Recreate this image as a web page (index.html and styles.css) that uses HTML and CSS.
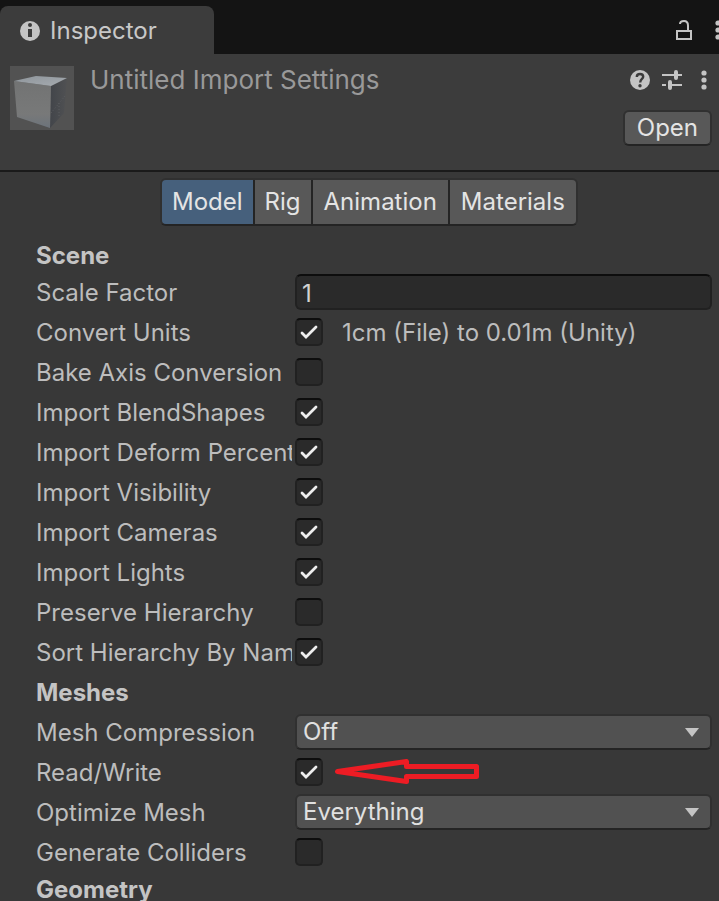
FILE: index.html
```html
<!DOCTYPE html>
<html lang="en">
<head>
<meta charset="utf-8">
<meta name="viewport" content="width=device-width, initial-scale=1">
<title>Inspector</title>
<link rel="stylesheet" href="styles.css">
</head>
<body>
<main class="inspector">
  <div class="tabbar">
    <div class="tab">
      <svg class="tab-icon" viewBox="0 0 20 20" aria-hidden="true">
        <circle cx="10" cy="10" r="10" fill="#c4c4c4"/>
        <circle cx="10" cy="4" r="2" fill="#3c3c3c"/>
        <path d="M8 8h4v8H8z" fill="#3c3c3c"/>
      </svg>
      <span class="tab-name">Inspector</span>
    </div>
    <div class="tabbar-tools">
      <button class="icon-button" type="button" aria-label="Lock">
        <svg width="16" height="20" viewBox="0 0 16 20"><path d="M1 11h14v8H1zM12 11V5.500C12 2.500 10.500 1 8 1S4 2.200 4 4" fill="none" stroke="#c4c4c4" stroke-width="2"/></svg>
      </button>
      <button class="icon-button" type="button" aria-label="Window menu">
        <svg width="6" height="20" viewBox="0 0 6 20" fill="#c4c4c4"><circle cx="3" cy="3" r="2.600"/><circle cx="3" cy="10" r="2.600"/><circle cx="3" cy="17" r="2.600"/></svg>
      </button>
    </div>
  </div>

  <header class="header">
    <svg class="preview" viewBox="0 0 64 64" aria-hidden="true">
      <defs>
        <linearGradient id="top" x1="0" y1="0" x2="1" y2="1"><stop offset="0" stop-color="#8e959b"/><stop offset="1" stop-color="#a6abb0"/></linearGradient>
        <linearGradient id="front" x1="0" y1="0" x2="0" y2="1"><stop offset="0" stop-color="#727373"/><stop offset=".7" stop-color="#787979"/><stop offset="1" stop-color="#6c737b"/></linearGradient>
        <linearGradient id="side" x1="0" y1="0" x2="1" y2="0"><stop offset="0" stop-color="#42454a"/><stop offset="1" stop-color="#505153"/></linearGradient>
      </defs>
      <path d="M0 0h64v64H0z" fill="#525252"/>
      <path d="M41 20L57 12 54 47 40 62z" fill="url(#side)"/>
      <path d="M4 15L41 20 40 62 7 51z" fill="url(#front)"/>
      <path d="M4 15L26 10 57 12 41 20z" fill="url(#top)"/>
      <path d="M41 47L55 30M49 37v14" stroke="#5b5d60" stroke-dasharray="1 2" fill="none"/>
    </svg>
    <h1 class="title">Untitled Import Settings</h1>
    <div class="header-side">
      <div class="header-tools">
        <button class="icon-button" type="button" aria-label="Help">
          <svg width="20" height="20" viewBox="0 0 20 20"><circle cx="10" cy="10" r="10" fill="#c4c4c4"/><path d="M6.800 7C6.800 5 8 4 10 4s3.200 1.100 3.200 2.800C13.200 9 10.200 9 10.200 12.500" fill="none" stroke="#3c3c3c" stroke-width="2.400"/><circle cx="10" cy="15.700" r="1.700" fill="#3c3c3c"/></svg>
        </button>
        <button class="icon-button" type="button" aria-label="Presets">
          <svg width="20" height="20" viewBox="0 0 20 20" fill="none" stroke="#c4c4c4"><path d="M0 5h12M16 5h4M0 15h4M8 15h12" stroke-width="2"/><path d="M14 2v6M8 12v6" stroke-width="4" stroke-linecap="round"/></svg>
        </button>
        <button class="icon-button" type="button" aria-label="More">
          <svg width="6" height="20" viewBox="0 0 6 20" fill="#c4c4c4"><circle cx="3" cy="3" r="2.600"/><circle cx="3" cy="10" r="2.600"/><circle cx="3" cy="17" r="2.600"/></svg>
        </button>
      </div>
      <button class="open-button" type="button">Open</button>
    </div>
  </header>

  <div class="body">
    <nav class="modes" aria-label="Import settings">
      <button class="mode mode-short mode-active" type="button" aria-pressed="true">Model</button>
      <button class="mode mode-short" type="button">Rig</button>
      <button class="mode" type="button">Animation</button>
      <button class="mode" type="button">Materials</button>
    </nav>

    <h2 class="section section-compact">Scene</h2>
    <div class="row"><label class="label" for="scale">Scale Factor</label><input class="text-field" id="scale" type="text" value="1"></div>
    <div class="row"><label class="label" for="units">Convert Units</label><input class="check" id="units" type="checkbox" checked><span class="note">1cm (File) to 0.01m (Unity)</span></div>
    <div class="row"><label class="label" for="bake">Bake Axis Conversion</label><input class="check" id="bake" type="checkbox"></div>
    <div class="row"><label class="label" for="blend">Import BlendShapes</label><input class="check" id="blend" type="checkbox" checked></div>
    <div class="row"><label class="label" for="deform">Import Deform Percent</label><input class="check" id="deform" type="checkbox" checked></div>
    <div class="row"><label class="label" for="visibility">Import Visibility</label><input class="check" id="visibility" type="checkbox" checked></div>
    <div class="row"><label class="label" for="cameras">Import Cameras</label><input class="check" id="cameras" type="checkbox" checked></div>
    <div class="row"><label class="label" for="lights">Import Lights</label><input class="check" id="lights" type="checkbox" checked></div>
    <div class="row"><label class="label" for="preserve">Preserve Hierarchy</label><input class="check" id="preserve" type="checkbox"></div>
    <div class="row"><label class="label" for="sort">Sort Hierarchy By Name</label><input class="check" id="sort" type="checkbox" checked></div>

    <h2 class="section">Meshes</h2>
    <div class="row"><label class="label" for="compression">Mesh Compression</label>
      <div class="select-wrap"><select class="select" id="compression"><option>Off</option></select><svg class="caret" viewBox="0 0 14 9" aria-hidden="true"><path d="M0 0h14L7 9z" fill="#c4c4c4"/></svg></div>
    </div>
    <div class="row"><label class="label" for="readwrite">Read/Write</label><input class="check" id="readwrite" type="checkbox" checked>
      <svg class="arrow" viewBox="0 0 146 26" aria-hidden="true"><path d="M3.500 12.500L72.500 2.500v5h70v10h-70v5z" fill="none" stroke="#ed1c24" stroke-width="5" stroke-linejoin="round"/></svg>
    </div>
    <div class="row"><label class="label" for="optimize">Optimize Mesh</label>
      <div class="select-wrap"><select class="select" id="optimize"><option>Everything</option></select><svg class="caret" viewBox="0 0 14 9" aria-hidden="true"><path d="M0 0h14L7 9z" fill="#c4c4c4"/></svg></div>
    </div>
    <div class="row"><label class="label" for="colliders">Generate Colliders</label><input class="check" id="colliders" type="checkbox"></div>

    <h2 class="section section-compact">Geometry</h2>
  </div>
</main>
</body>
</html>
```

FILE: styles.css
```css
* {
  box-sizing: border-box;
}

body {
  margin: 0;
  background: #383838;
  color: #bdbdbd;
  font: 400 24px/32px Inter, "Liberation Sans", sans-serif;
}

button,
input,
select {
  margin: 0;
  font: inherit;
  color: inherit;
}

.inspector {
  height: 100vh;
  overflow: hidden;
}

.tabbar {
  display: flex;
  justify-content: space-between;
  height: 54px;
  padding-top: 6px;
  background: #141414;
}

.tab {
  display: flex;
  align-items: center;
  gap: 10px;
  width: 214px;
  padding: 2px 0 0 20px;
  border-radius: 8px 8px 0 0;
  background: #3c3c3c;
  color: #c8c8c8;
}

.tab-icon {
  width: 20px;
  height: 20px;
}

.tabbar-tools {
  display: flex;
  align-items: center;
  gap: 23px;
  margin-right: -2px;
}

.icon-button {
  display: flex;
  padding: 0;
  border: 0;
  background: none;
}

.header {
  display: flex;
  align-items: flex-start;
  height: 118px;
  padding: 12px 8px 0 10px;
  border-bottom: 2px solid #1a1a1a;
  background: #3c3c3c;
}

.preview {
  flex: none;
  width: 64px;
  height: 64px;
}

.title {
  flex: 1;
  margin: -2px 0 0 16px;
  color: #999;
  font-size: 26px;
  font-weight: 400;
}

.header-side {
  display: flex;
  flex-direction: column;
  align-items: flex-end;
  gap: 20px;
  padding-top: 4px;
}

.header-tools {
  display: flex;
  gap: 12px;
  padding-right: 4px;
}

.header-tools .icon-button:last-child {
  margin-left: 7px;
}

.open-button {
  height: 36px;
  margin-right: -1px;
  padding: 0 12px;
  border: 2px solid #303030;
  border-bottom-color: #242424;
  border-radius: 6px;
  background: #585858;
  color: #e4e4e4;
}

.body {
  padding: 6px 7px 0 36px;
}

.modes {
  display: flex;
  width: max-content;
  margin: 0 0 12px 124px;
  border: 2px solid #303030;
  border-bottom-color: #242424;
  border-radius: 6px;
  overflow: hidden;
}

.mode {
  height: 44px;
  padding: 0 11px;
  border: 0;
  border-left: 2px solid #242424;
  background: #585858;
  color: #e4e4e4;
}

.mode-short {
  padding: 0 10px;
}

.mode-active {
  border-left: 0;
  background: #46607c;
}

.section {
  height: 40px;
  margin: 0;
  color: #c4c4c4;
  font-size: 24px;
  font-weight: 700;
  line-height: 42px;
}

.section-compact {
  height: 34px;
  line-height: 36px;
}

.row {
  display: flex;
  align-items: center;
  height: 40px;
}

.label {
  flex: none;
  width: 256px;
  margin-right: 3px;
  padding-top: 2px;
  overflow: hidden;
  white-space: nowrap;
}

.text-field {
  flex: 1;
  min-width: 0;
  height: 36px;
  padding: 2px 5px 0;
  border: 2px solid #212121;
  border-top-color: #0d0d0d;
  border-radius: 6px;
  background: #2a2a2a;
  color: #d2d2d2;
}

.check {
  flex: none;
  width: 28px;
  height: 28px;
  appearance: none;
  border: 2px solid #212121;
  border-top-color: #0d0d0d;
  border-radius: 5px;
  background: #2a2a2a;
}

.check:checked {
  background: #2a2a2a url("data:image/svg+xml,%3Csvg xmlns='http://www.w3.org/2000/svg' viewBox='0 0 24 24'%3E%3Cpath d='M5 13l4 4L19 7' fill='none' stroke='%23eee' stroke-width='2.800' stroke-linecap='round'/%3E%3C/svg%3E") center / 24px 24px no-repeat;
}

.note {
  margin-left: 19px;
  padding-top: 2px;
}

.select-wrap {
  display: flex;
  position: relative;
  flex: 1;
}

.select {
  width: 100%;
  height: 36px;
  padding: 0 36px 0 6px;
  appearance: none;
  border: 2px solid #303030;
  border-bottom-color: #242424;
  border-radius: 6px;
  background: #515151;
  color: #e0e0e0;
}

.caret {
  position: absolute;
  top: 14px;
  right: 13px;
  width: 14px;
  height: 9px;
  pointer-events: none;
}

.arrow {
  width: 146px;
  height: 26px;
  margin-left: 11px;
}
```
